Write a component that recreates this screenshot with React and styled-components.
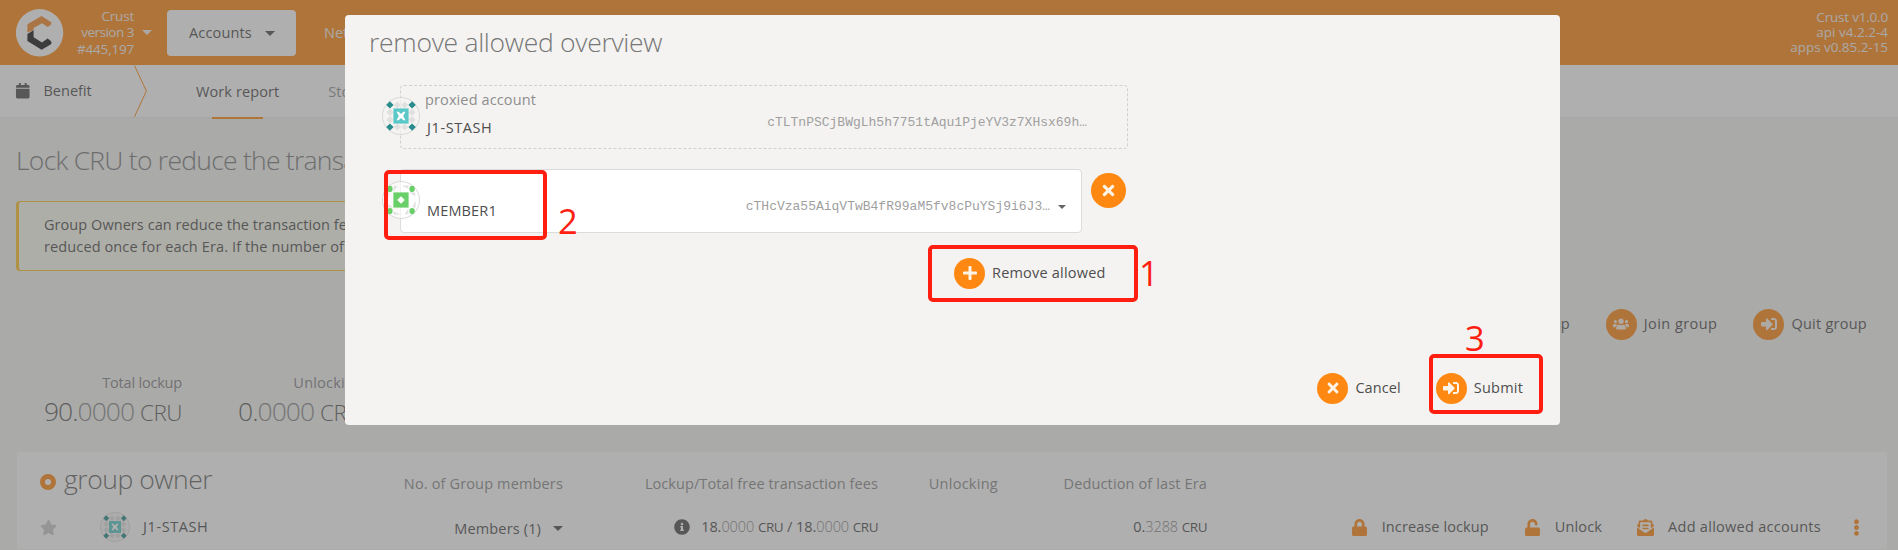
import React from "react";
import styled, { createGlobalStyle, css } from "styled-components";
import {
  FaCalendar, FaUsers, FaStar, FaInfoCircle, FaLock, FaUnlock,
  FaEnvelopeOpenText, FaEllipsisV, FaTimes, FaPlus, FaSignInAlt,
} from "react-icons/fa";

const orange = "#ff8812";
const ink = "#4e4e4e";
const muted = "#8b8b8b";

const GlobalStyle = createGlobalStyle`
  * { box-sizing: border-box; }
  body {
    margin: 0;
    width: 1898px;
    height: 550px;
    overflow: hidden;
    background: #f5f4f3;
    color: ${ink};
    font-family: "Open Sans", "Noto Sans", sans-serif;
    font-size: 14.5px;
    line-height: 22px;
  }
  svg { display: block; flex: none; }
`;

const Text = styled.span`
  white-space: nowrap;
  letter-spacing: ${(p) => p.$ls || 0}px;
`;

const Title = styled.h1`
  margin: 0;
  font-size: 26.5px;
  font-weight: 300;
  line-height: 36px;
  white-space: nowrap;
  letter-spacing: ${(p) => p.$ls || 0}px;
`;

const Caret = styled.i`
  flex: none;
  border: solid transparent;
  border-width: ${(p) => p.$h || 5}px ${(p) => p.$w || 5}px 0;
  border-top-color: currentColor;
`;

/* ---------- top bar ---------- */

const TopBar = styled.header`
  display: flex;
  align-items: center;
  height: 65px;
  padding: 0 10px 0 16px;
  background: ${orange};
  color: #f5f0ec;
`;

const VersionStack = styled.div`
  display: flex;
  flex-direction: column;
  align-items: flex-end;
  width: ${(p) => p.$w || 120}px;
  font-size: 13.5px;
  line-height: ${(p) => p.$lh}px;
`;

const Chain = styled.div`
  display: flex;
  align-items: center;
  gap: 8px;
`;

const MenuButton = styled.div`
  display: flex;
  align-items: center;
  gap: 13px;
  width: 129px;
  height: 46px;
  margin: 0 28px 0 15px;
  padding: 1px 0 0 22px;
  border-radius: 4px;
  background: #fff;
  color: ${ink};
`;

const Spacer = styled.div`
  flex: 1;
`;

/* ---------- tabs ---------- */

const TabBar = styled.nav`
  display: flex;
  align-items: stretch;
  height: 52px;
  padding-left: 15px;
  background: #fff;
  box-shadow: 0 1px 0 #ececec;
`;

const Section = styled.div`
  display: flex;
  align-items: center;
  gap: 13px;
  width: 119px;
`;

const Tab = styled.div`
  position: relative;
  display: flex;
  align-items: center;
  padding-top: 1px;
  margin-left: 49px;
  color: ${(p) => (p.$active ? ink : "#919191")};
  ${(p) => p.$active && css`
    &::after {
      content: "";
      position: absolute;
      left: 16px;
      bottom: -2px;
      width: 51px;
      height: 2px;
      background: ${orange};
    }
  `}
`;

/* ---------- page ---------- */

const PageTitle = styled(Title)`
  padding: 25px 0 0 16px;
  color: #7b7b7b;
`;

const Warning = styled.article`
  width: 1300px;
  height: 70px;
  margin: 23px 0 0 16px;
  padding: 12px 25px;
  border: 1px solid #ffc426;
  border-left-width: 3px;
  border-radius: 4px;
  background: #fdfcf0;
`;

const Line = styled.div`
  white-space: nowrap;
  letter-spacing: ${(p) => p.$ls}px;
`;

const GroupActions = styled.div`
  display: flex;
  justify-content: flex-end;
  gap: 36px;
  padding: 37px 31px 0 0;
`;

const ActionButton = styled.div`
  display: flex;
  align-items: center;
  gap: 7px;
  height: 32px;
`;

const RoundIcon = styled.span`
  display: flex;
  align-items: center;
  justify-content: center;
  flex: none;
  width: ${(p) => p.$size || 31}px;
  height: ${(p) => p.$size || 31}px;
  border-radius: 50%;
  background: ${orange};
  color: #fdf3e6;
`;

const Summary = styled.section`
  display: flex;
  height: 112px;
  padding: 32px 0 0 32px;
`;

const Stat = styled.div`
  display: flex;
  flex-direction: column;
  align-items: flex-end;
  width: ${(p) => p.$w}px;
  color: #858585;
`;

const StatValue = styled.div`
  margin-top: -1px;
  font-size: 26.5px;
  font-weight: 300;
  line-height: 36px;
  letter-spacing: -1px;
  white-space: nowrap;
  color: #5c5c5c;
`;

const Decimals = styled.span`
  font-weight: 300;
  opacity: 0.7;
`;

const Unit = styled.span`
  font-size: ${(p) => p.$size || 22.5}px;
  letter-spacing: -0.5px;
`;

/* ---------- table ---------- */

const Card = styled.section`
  margin: 0 11px 0 17px;
  background: #fff;
`;

const tableColumns = css`
  display: grid;
  grid-template-columns: 328px 218px 315px 120px 209px 1fr;
`;

const HeadRow = styled.div`
  ${tableColumns}
  align-items: baseline;
  height: 53px;
  padding-top: 9px;
  color: ${muted};
`;

const Row = styled.div`
  ${tableColumns}
  align-items: center;
  height: 44px;
`;

const HeadTitle = styled.div`
  display: flex;
  align-items: baseline;
  gap: 8px;
  padding-left: 23px;
  color: #666;
`;

const Ring = styled.i`
  width: 16px;
  height: 16px;
  transform: translateY(1px);
  border: 5.5px solid ${orange};
  border-radius: 50%;
`;

const Cell = styled.div`
  display: flex;
  align-items: center;
  justify-content: flex-end;
  gap: ${(p) => p.$gap || 0}px;
  padding-top: ${(p) => p.$top || 0}px;
  white-space: nowrap;
`;

const AccountCell = styled(Cell)`
  justify-content: flex-start;
  padding-left: 23px;
  svg:first-child { margin-right: 43px; color: #cacaca; }
  svg + svg { margin-right: 13px; }
`;

const Amount = styled.span`
  letter-spacing: -0.05px;
`;

const RowActions = styled.div`
  display: flex;
  align-items: center;
  justify-content: flex-end;
  padding-right: 22px;
`;

const RowAction = styled.div`
  display: flex;
  align-items: center;
  gap: ${(p) => p.$gap}px;
  margin-right: ${(p) => p.$after}px;
  svg { color: ${orange}; }
`;

const Dots = styled(FaEllipsisV)`
  color: ${orange};
`;

/* ---------- modal ---------- */

const Dimmer = styled.div`
  position: absolute;
  inset: 0;
  background: rgba(96, 96, 96, 0.5);
`;

const Modal = styled.div`
  position: absolute;
  top: 15px;
  left: 345px;
  display: flex;
  flex-direction: column;
  width: 1215px;
  height: 410px;
  padding: 9px 37px 21px 24px;
  border-radius: 4px;
  background: #f4f3f1;
`;

const ModalTitle = styled(Title)`
  color: #777;
`;

const Fields = styled.div`
  display: flex;
  flex-direction: column;
  gap: 20px;
  padding: 25px 0 0 31px;
`;

const FieldRow = styled.div`
  display: flex;
  gap: 9px;
`;

const AddressField = styled.div`
  display: flex;
  justify-content: space-between;
  width: ${(p) => p.$w}px;
  height: 64px;
  border: 1px ${(p) => (p.$select ? "solid #dcdcdc" : "dashed #d0d0cf")};
  border-radius: 4px;
  background: ${(p) => (p.$select ? "#fff" : "transparent")};
`;

const FieldAccount = styled.div`
  display: flex;
  gap: 7px;
  margin-left: -19px;
  padding-top: 11px;
`;

const Names = styled.div`
  display: flex;
  flex-direction: column;
  justify-content: flex-end;
  height: ${(p) => p.$h}px;
`;

const FieldLabel = styled(Text)`
  margin: 0 0 6px -2px;
  color: #8e8e8e;
`;

const Address = styled.span`
  display: flex;
  align-items: center;
  gap: 8px;
  height: 22px;
  margin: 26px ${(p) => p.$right}px 0 0;
  font-family: "Liberation Mono", monospace;
  font-size: 13px;
  color: #a0a09f;
  i { color: #666; }
`;

const RemoveButton = styled(RoundIcon)`
  margin-top: 4px;
`;

const AddLine = styled.div`
  display: flex;
  padding: 24px 0 0 585px;
`;

const Footer = styled.footer`
  display: flex;
  justify-content: flex-end;
  gap: 35px;
  margin-top: auto;
`;

/* ---------- annotations ---------- */

const MarkBox = styled.div`
  position: absolute;
  left: ${(p) => p.$x}px;
  top: ${(p) => p.$y}px;
  width: ${(p) => p.$w}px;
  height: ${(p) => p.$h}px;
  border: 4px solid #ff1e10;
  border-radius: 5px;
`;

const MarkNumber = styled.span`
  position: absolute;
  left: ${(p) => p.$x}px;
  top: ${(p) => p.$y}px;
  font-size: 34.5px;
  line-height: 40px;
  color: #ff1e10;
`;

/* ---------- drawings ---------- */

const Logo = () => (
  <svg width="48" height="48" viewBox="0 0 48 48">
    <circle cx="23.6" cy="23.8" r="23.7" fill="#fff" />
    <path d="M11.4 23.6V15.3L25.6 7L35.7 13.5L34.6 16L31.6 18L26 14.3L17.6 19V21.3Z" fill="#f5892a" />
    <path d="M11.4 25L17.6 21.2V28.2L26 33.4L31.6 29.6L34.6 31.7L35.7 34L34.6 35.6L25.6 40.7L11.4 32Z" fill="#181818" />
  </svg>
);

const Chevron = () => (
  <svg width="13" height="52" viewBox="0 0 13 52" fill="none">
    <path d="M0.5 .7L12.4 26L0.5 51.7" stroke={orange} strokeWidth="1" />
  </svg>
);

const sideSpots = [[-3.7, -11], [3.7, -11], [-3.7, 11], [3.7, 11], [-11, -3.7], [-11, 3.7], [11, -3.7], [11, 3.7]];
const corners = [[-11.1, -11.1], [11.1, -11.1], [-11.1, 11.1], [11.1, 11.1]];

const StashIcon = ({ size = 38 }) => (
  <svg width={size} height={size} viewBox="-19 -19 38 38">
    <circle r="18.5" fill="#f5f5f4" fillOpacity="0.6" stroke="#d8d8d8" strokeWidth="1" />
    {sideSpots.map(([x, y]) => (
      <path key={`${x},${y}`} d={`M${x} ${y - 3.6}l3.6 3.6l-3.6 3.6l-3.6-3.6z`} fill="#e0e0e0" />
    ))}
    {corners.map(([x, y]) => (
      <path key={`${x},${y}`} d={`M${x} ${y - 3.7}l3.7 3.7l-3.7 3.7l-3.7-3.7z`} fill="#2a8d8d" />
    ))}
    <rect x="-7.6" y="-7.6" width="15.2" height="15.2" fill="#5bc8c8" />
    <path d="M-4.5-4.2L-2.3-4.2L0-2L2.3-4.2L4.5-4.2L2.2 0L4.5 4.2L2.3 4.2L0 2L-2.3 4.2L-4.5 4.2L-2.2 0Z" fill="#fff" />
  </svg>
);

const MemberIcon = () => (
  <svg width="38" height="38" viewBox="-19 -19 38 38">
    <circle r="18.5" fill="#fff" fillOpacity="0.6" stroke="#d8d8d8" strokeWidth="1" />
    {[0, 90, 180, 270].map((a) => (
      <path key={a} transform={`rotate(${a})`} d="M-7.4-8.2V-14.2H-3.4ZM.6-14.6H7.4V-11.2Z" fill="#e2e2e2" />
    ))}
    {corners.map(([x, y]) => (
      <ellipse key={`${x},${y}`} cx={x} cy={y} rx="2.7" ry="3.1" fill="#69cf69" />
    ))}
    <rect x="-7.6" y="-7.6" width="15.2" height="15.2" fill="#69cf69" />
    <path d="M0-3.8L3.8 0L0 3.8L-3.8 0Z" fill="#fff" />
  </svg>
);

const IconAction = ({ icon: Icon, iconSize = 16, ls, children }) => (
  <ActionButton>
    <RoundIcon><Icon size={iconSize} /></RoundIcon>
    <Text $ls={ls}>{children}</Text>
  </ActionButton>
);

export default function App() {
  return (
    <>
      <GlobalStyle />
      <TopBar>
        <Logo />
        <Chain>
          <VersionStack $w={70} $lh={16.6}>
            <Text $ls={-0.2}>Crust</Text>
            <Text $ls={-0.5}>version 3</Text>
            <Text $ls={-0.2}>#445,197</Text>
          </VersionStack>
          <Caret />
        </Chain>
        <MenuButton>
          <Text $ls={0.15}>Accounts</Text>
          <Caret />
        </MenuButton>
        <Text>Network</Text>
        <Spacer />
        <VersionStack $lh={15.2}>
          <Text $ls={-0.2}>Crust v1.0.0</Text>
          <Text>api v4.2.2-4</Text>
          <Text $ls={-0.05}>apps v0.85.2-15</Text>
        </VersionStack>
      </TopBar>

      <TabBar>
        <Section>
          <FaCalendar size={15.5} />
          <Text>Benefit</Text>
        </Section>
        <Chevron />
        <Tab $active><Text $ls={0.1}>Work report</Text></Tab>
        <Tab><Text $ls={0.1}>Storage</Text></Tab>
      </TabBar>

      <PageTitle $ls={-0.75}>Lock CRU to reduce the transaction fee</PageTitle>
      <Warning>
        <Line $ls={0.06}>Group Owners can reduce the transaction fee</Line>
        <Line $ls={0.12}>reduced once for each Era. If the number of</Line>
      </Warning>

      <GroupActions>
        <IconAction icon={FaPlus}>Create group</IconAction>
        <IconAction icon={FaUsers} ls={0.45}>Join group</IconAction>
        <IconAction icon={FaSignInAlt} ls={0.25}>Quit group</IconAction>
      </GroupActions>

      <Summary>
        <Stat $w={150}>
          <Text $ls={-0.2}>Total lockup</Text>
          <StatValue>90.<Decimals>0000</Decimals> <Unit>CRU</Unit></StatValue>
        </Stat>
        <Stat $w={180}>
          <Text $ls={0.2}>Unlocking</Text>
          <StatValue>0.<Decimals>0000</Decimals> <Unit>CRU</Unit></StatValue>
        </Stat>
      </Summary>

      <Card>
        <HeadRow>
          <HeadTitle><Ring /><Title $ls={-0.45}>group owner</Title></HeadTitle>
          <Cell><Text $ls={0.15}>No. of Group members</Text></Cell>
          <Cell><Text $ls={0.08}>Lockup/Total free transaction fees</Text></Cell>
          <Cell><Text $ls={0.27}>Unlocking</Text></Cell>
          <Cell><Text $ls={0.14}>Deduction of last Era</Text></Cell>
        </HeadRow>
        <Row>
          <AccountCell>
            <FaStar size={17} />
            <StashIcon size={30} />
            <Text $ls={0.6}>J1-STASH</Text>
          </AccountCell>
          <Cell $gap={12} $top={3}><Text $ls={0.15}>Members (1)</Text><Caret /></Cell>
          <Cell $gap={11}>
            <FaInfoCircle size={16} />
            <Amount>
              18.<Decimals>0000</Decimals> <Unit $size={13.5}>CRU</Unit> / 18.<Decimals>0000</Decimals> <Unit $size={13.5}>CRU</Unit>
            </Amount>
          </Cell>
          <Cell />
          <Cell><Amount>0.<Decimals>3288</Decimals> <Unit $size={13.5}>CRU</Unit></Amount></Cell>
          <RowActions>
            <RowAction $gap={14} $after={35}><FaLock size={17} /><Text $ls={0.1}>Increase lockup</Text></RowAction>
            <RowAction $gap={14} $after={35}><FaUnlock size={17} /><Text $ls={0.15}>Unlock</Text></RowAction>
            <RowAction $gap={14} $after={27}><FaEnvelopeOpenText size={17} /><Text $ls={0.28}>Add allowed accounts</Text></RowAction>
            <Dots size={17} />
          </RowActions>
        </Row>
      </Card>

      <Dimmer />

      <Modal>
        <ModalTitle $ls={-0.29}>remove allowed overview</ModalTitle>
        <Fields>
          <AddressField $w={728}>
            <FieldAccount>
              <StashIcon />
              <Names $h={42}>
                <FieldLabel $ls={0.12}>proxied account</FieldLabel>
                <Text $ls={0.6}>J1-STASH</Text>
              </Names>
            </FieldAccount>
            <Address $right={40}>cTLTnPSCjBWgLh5h7751tAqu1PjeYV3z7XHsx69h…</Address>
          </AddressField>
          <FieldRow>
            <AddressField $select $w={682}>
              <FieldAccount>
                <MemberIcon />
                <Names $h={41}><Text $ls={0.15}>MEMBER1</Text></Names>
              </FieldAccount>
              <Address $right={15}>
                cTHcVza55AiqVTwB4fR99aM5fv8cPuYSj9i6J3…
                <Caret $w={4.5} $h={4.5} />
              </Address>
            </AddressField>
            <RemoveButton $size={35}><FaTimes size={17} /></RemoveButton>
          </FieldRow>
        </Fields>
        <AddLine>
          <IconAction icon={FaPlus} ls={0.2}>Remove allowed</IconAction>
        </AddLine>
        <Footer>
          <IconAction icon={FaTimes} ls={0.1}>Cancel</IconAction>
          <IconAction icon={FaSignInAlt} ls={0.2}>Submit</IconAction>
        </Footer>
      </Modal>

      <MarkBox $x={928} $y={245} $w={210} $h={57} />
      <MarkNumber $x={1139} $y={253}>1</MarkNumber>
      <MarkBox $x={384} $y={170} $w={163} $h={70} />
      <MarkNumber $x={558} $y={201}>2</MarkNumber>
      <MarkBox $x={1429} $y={354} $w={114} $h={60} />
      <MarkNumber $x={1465} $y={318}>3</MarkNumber>
    </>
  );
}
